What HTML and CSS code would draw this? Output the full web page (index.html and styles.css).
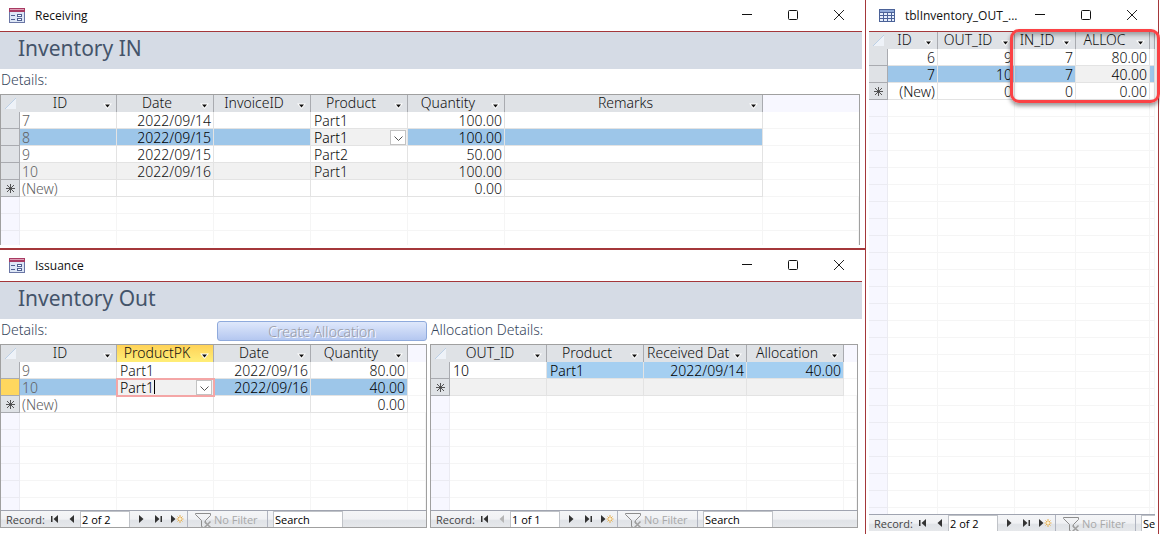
FILE: index.html
```html
<!DOCTYPE html>
<html lang="en">
<head>
    <meta charset="UTF-8">
    <meta name="viewport" content="width=device-width, initial-scale=1.0">
    <title>Inventory</title>
    <link rel="stylesheet" href="styles.css">
</head>
<body>
    <!-- shared icons -->
    <svg class="sprite" aria-hidden="true">
        <symbol id="i-form" viewBox="0 0 16 15">
            <rect x=".5" y=".5" width="15" height="14" fill="#dde6f6" stroke="#6a76a5"/>
            <rect x="0" y="0" width="16" height="4" fill="#a83a62"/>
            <path d="M1 1.500h14" stroke="#dfa0b8"/>
            <path d="M2 7.500h4M2 11.500h4" stroke="#4f5f91"/>
            <rect x="8.500" y="6.500" width="4" height="2" fill="#fff" stroke="#4f5f91"/>
            <rect x="8.500" y="10.500" width="4" height="2" fill="#fff" stroke="#4f5f91"/>
        </symbol>
        <symbol id="i-table" viewBox="0 0 16 13">
            <rect width="16" height="13" fill="#4b6298"/>
            <path d="M1 1h14v2H1z" fill="#8fa9d8"/>
            <path d="M1 4h3v2H1zM5 4h3v2H5zM9 4h3v2H9zM13 4h2v2h-2zM1 7h3v2H1zM5 7h3v2H5zM9 7h3v2H9zM13 7h2v2h-2zM1 10h3v2H1zM5 10h3v2H5zM9 10h3v2H9zM13 10h2v2h-2z" fill="#e6effc"/>
        </symbol>
        <symbol id="i-min" viewBox="0 0 11 11"><path d="M0 4.500h10" stroke="#111"/></symbol>
        <symbol id="i-max" viewBox="0 0 11 11"><rect x=".5" y=".5" width="9" height="9" rx="1" fill="none" stroke="#111"/></symbol>
        <symbol id="i-close" viewBox="0 0 11 11"><path d="M0 0l10 10M10 0L0 10" stroke="#222"/></symbol>
        <symbol id="i-first" viewBox="0 0 7 8"><path d="M0 1h1.500v6H0zM7 0v8L2.500 4z"/></symbol>
        <symbol id="i-prev" viewBox="0 0 7 8"><path d="M6 0v8L1.500 4z"/></symbol>
        <symbol id="i-next" viewBox="0 0 7 8"><path d="M1 0v8l4.500-4z"/></symbol>
        <symbol id="i-last" viewBox="0 0 7 8"><path d="M5.500 1H7v6H5.500zM0 0v8l4.500-4z"/></symbol>
        <symbol id="i-new" viewBox="0 0 13 8">
            <path d="M0 0v8l4.500-4z"/>
            <path d="M9 0v8M5.500 4h7M6.500 1.500l5 5M11.500 1.500l-5 5" stroke="#e9b04e"/>
            <circle cx="9" cy="4" r="1.200" fill="#fff3d0"/>
        </symbol>
        <symbol id="i-filter" viewBox="0 0 17 16">
            <path d="M.5 1.500h15v2l-5 5v3M.5 1.500v1l6 6v6l2 1" fill="none" stroke="#8d8d8d"/>
            <path d="M9.500 9.500l6 6M15.500 9.500l-6 6" stroke="#a0a0a0" stroke-width="1.500"/>
        </symbol>
        <symbol id="i-star" viewBox="0 0 9 9"><path d="M4.500 0v9M0 4.500h9M1 1l7 7M8 1L1 8" stroke="#444" stroke-width=".9"/></symbol>
        <symbol id="i-arrow" viewBox="0 0 9 6"><path d="M0 .5h9L4.500 6z" fill="#fff"/><path d="M2 1.500h5L4.500 4.500z" fill="#111"/></symbol>
        <symbol id="i-chevron" viewBox="0 0 9 6"><path d="M.5.5l4 4 4-4" fill="none" stroke="#555"/></symbol>
        <symbol id="i-corner" viewBox="0 0 11 11"><path d="M11 0v11H0z" fill="#eef2f8"/><path d="M0 11L11 0" stroke="#bcd0e6"/></symbol>
    </svg>

    <main class="workspace">
        <div class="forms">
            <section class="window">
                <header class="titlebar">
                    <svg class="win-icon"><use href="#i-form"/></svg>
                    <span class="win-title">Receiving</span>
                    <button class="win-btn" aria-label="Minimize"><svg><use href="#i-min"/></svg></button>
                    <button class="win-btn" aria-label="Maximize"><svg><use href="#i-max"/></svg></button>
                    <button class="win-btn" aria-label="Close"><svg><use href="#i-close"/></svg></button>
                </header>
                <h1 class="form-header">Inventory IN</h1>
                <div class="caption">Details:</div>
                <div class="sheet sheet-receiving">
                    <div class="grid">
                        <table class="datasheet">
                            <colgroup><col class="c-sel"><col class="c-std"><col class="c-std"><col class="c-std"><col class="c-std"><col class="c-std"><col class="c-remarks"><col></colgroup>
                            <thead>
                                <tr>
                                    <th class="sel"><svg class="corner"><use href="#i-corner"/></svg></th>
                                    <th><div class="head"><span>ID</span><svg><use href="#i-arrow"/></svg></div></th>
                                    <th><div class="head"><span>Date</span><svg><use href="#i-arrow"/></svg></div></th>
                                    <th><div class="head"><span>InvoiceID</span><svg><use href="#i-arrow"/></svg></div></th>
                                    <th><div class="head"><span>Product</span><svg><use href="#i-arrow"/></svg></div></th>
                                    <th><div class="head"><span>Quantity</span><svg><use href="#i-arrow"/></svg></div></th>
                                    <th><div class="head"><span>Remarks</span><svg><use href="#i-arrow"/></svg></div></th>
                                    <th class="rest"></th>
                                </tr>
                            </thead>
                            <tbody>
                                <tr><td class="sel"></td><td class="auto">7</td><td class="num">2022/09/14</td><td></td><td>Part1</td><td class="num">100.00</td><td></td><td class="rest"></td></tr>
                                <tr class="current"><td class="sel"></td><td class="auto">8</td><td class="num">2022/09/15</td><td></td>
                                    <td class="combo">
                                        <select aria-label="Product"><option>Part1</option><option>Part2</option></select>
                                        <span class="drop"><svg><use href="#i-chevron"/></svg></span>
                                    </td>
                                    <td class="num">100.00</td><td></td><td class="rest"></td></tr>
                                <tr><td class="sel"></td><td class="auto">9</td><td class="num">2022/09/15</td><td></td><td>Part2</td><td class="num">50.00</td><td></td><td class="rest"></td></tr>
                                <tr class="alt"><td class="sel"></td><td class="auto">10</td><td class="num">2022/09/16</td><td></td><td>Part1</td><td class="num">100.00</td><td></td><td class="rest"></td></tr>
                                <tr><td class="sel"><svg class="star"><use href="#i-star"/></svg></td><td class="auto">(New)</td><td></td><td></td><td></td><td class="num">0.00</td><td></td><td class="rest"></td></tr>
                            </tbody>
                        </table>
                    </div>
                </div>
            </section>

            <section class="window">
                <header class="titlebar">
                    <svg class="win-icon"><use href="#i-form"/></svg>
                    <span class="win-title">Issuance</span>
                    <button class="win-btn" aria-label="Minimize"><svg><use href="#i-min"/></svg></button>
                    <button class="win-btn" aria-label="Maximize"><svg><use href="#i-max"/></svg></button>
                    <button class="win-btn" aria-label="Close"><svg><use href="#i-close"/></svg></button>
                </header>
                <h1 class="form-header">Inventory Out</h1>
                <div class="split">
                    <div class="pane">
                        <div class="caption">Details:<button class="create" disabled>Create Allocation</button></div>
                        <div class="sheet">
                            <div class="grid">
                                <table class="datasheet">
                                    <colgroup><col class="c-sel"><col class="c-std"><col class="c-std"><col class="c-std"><col class="c-std"><col></colgroup>
                                    <thead>
                                        <tr>
                                            <th class="sel"><svg class="corner"><use href="#i-corner"/></svg></th>
                                            <th><div class="head"><span>ID</span><svg><use href="#i-arrow"/></svg></div></th>
                                            <th class="active"><div class="head"><span>ProductPK</span><svg><use href="#i-arrow"/></svg></div></th>
                                            <th><div class="head"><span>Date</span><svg><use href="#i-arrow"/></svg></div></th>
                                            <th><div class="head"><span>Quantity</span><svg><use href="#i-arrow"/></svg></div></th>
                                            <th class="rest"></th>
                                        </tr>
                                    </thead>
                                    <tbody>
                                        <tr><td class="sel"></td><td class="auto">9</td><td>Part1</td><td class="num">2022/09/16</td><td class="num">80.00</td><td class="rest"></td></tr>
                                        <tr class="current"><td class="sel active"></td><td class="auto">10</td>
                                            <td class="combo editing">
                                                <select aria-label="ProductPK"><option>Part1</option><option>Part2</option></select>
                                                <span class="caret"></span>
                                                <span class="drop"><svg><use href="#i-chevron"/></svg></span>
                                            </td>
                                            <td class="num">2022/09/16</td><td class="num">40.00</td><td class="rest"></td></tr>
                                        <tr><td class="sel"><svg class="star"><use href="#i-star"/></svg></td><td class="auto">(New)</td><td></td><td></td><td class="num">0.00</td><td class="rest"></td></tr>
                                    </tbody>
                                </table>
                            </div>
                            <nav class="recordbar">
                                <label for="rec-issuance">Record:</label>
                                <button aria-label="First record"><svg><use href="#i-first"/></svg></button>
                                <button aria-label="Previous record"><svg><use href="#i-prev"/></svg></button>
                                <input class="rec" id="rec-issuance" type="text" value="2 of 2">
                                <button aria-label="Next record"><svg><use href="#i-next"/></svg></button>
                                <button aria-label="Last record"><svg><use href="#i-last"/></svg></button>
                                <button class="new" aria-label="New record"><svg><use href="#i-new"/></svg></button>
                                <button class="filter" disabled><svg><use href="#i-filter"/></svg>No Filter</button>
                                <input class="search" type="text" placeholder="Search" aria-label="Search">
                            </nav>
                        </div>
                    </div>
                    <div class="pane">
                        <div class="caption">Allocation Details:</div>
                        <div class="sheet">
                            <div class="grid">
                                <table class="datasheet">
                                    <colgroup><col class="c-sel"><col class="c-std"><col class="c-std"><col class="c-received"><col class="c-std"><col></colgroup>
                                    <thead>
                                        <tr>
                                            <th class="sel"><svg class="corner"><use href="#i-corner"/></svg></th>
                                            <th><div class="head"><span>OUT_ID</span><svg><use href="#i-arrow"/></svg></div></th>
                                            <th><div class="head"><span>Product</span><svg><use href="#i-arrow"/></svg></div></th>
                                            <th><div class="head"><span class="cut">Received Date</span><svg><use href="#i-arrow"/></svg></div></th>
                                            <th><div class="head"><span>Allocation</span><svg><use href="#i-arrow"/></svg></div></th>
                                            <th class="rest"></th>
                                        </tr>
                                    </thead>
                                    <tbody>
                                        <tr class="current light"><td class="sel"></td><td class="first">10</td><td>Part1</td><td class="num">2022/09/14</td><td class="num">40.00</td><td class="rest"></td></tr>
                                        <tr class="alt"><td class="sel"><svg class="star"><use href="#i-star"/></svg></td><td></td><td></td><td></td><td></td><td class="rest"></td></tr>
                                    </tbody>
                                </table>
                            </div>
                            <nav class="recordbar">
                                <label for="rec-allocation">Record:</label>
                                <button aria-label="First record"><svg><use href="#i-first"/></svg></button>
                                <button aria-label="Previous record" disabled><svg><use href="#i-prev"/></svg></button>
                                <input class="rec" id="rec-allocation" type="text" value="1 of 1">
                                <button aria-label="Next record"><svg><use href="#i-next"/></svg></button>
                                <button aria-label="Last record"><svg><use href="#i-last"/></svg></button>
                                <button class="new" aria-label="New record"><svg><use href="#i-new"/></svg></button>
                                <button class="filter" disabled><svg><use href="#i-filter"/></svg>No Filter</button>
                                <input class="search" type="text" placeholder="Search" aria-label="Search">
                            </nav>
                        </div>
                    </div>
                </div>
            </section>
        </div>

        <section class="window table-window">
            <header class="titlebar">
                <svg class="win-icon"><use href="#i-table"/></svg>
                <span class="win-title">tblInventory_OUT_...</span>
                <button class="win-btn" aria-label="Minimize"><svg><use href="#i-min"/></svg></button>
                <button class="win-btn" aria-label="Maximize"><svg><use href="#i-max"/></svg></button>
                <button class="win-btn" aria-label="Close"><svg><use href="#i-close"/></svg></button>
            </header>
            <div class="grid">
                <table class="datasheet">
                    <colgroup><col class="c-sel"><col class="c-id"><col class="c-out"><col class="c-in"><col class="c-alloc"><col></colgroup>
                    <thead>
                        <tr>
                            <th class="sel"><svg class="corner"><use href="#i-corner"/></svg></th>
                            <th><div class="head"><span>ID</span><svg><use href="#i-arrow"/></svg></div></th>
                            <th><div class="head"><span>OUT_ID</span><svg><use href="#i-arrow"/></svg></div></th>
                            <th><div class="head"><span>IN_ID</span><svg><use href="#i-arrow"/></svg></div></th>
                            <th><div class="head"><span>ALLOC</span><svg><use href="#i-arrow"/></svg></div></th>
                            <th></th>
                        </tr>
                    </thead>
                    <tbody>
                        <tr><td class="sel"></td><td class="num">6</td><td class="num">9</td><td class="num">7</td><td class="num">80.00</td><td></td></tr>
                        <tr class="current"><td class="sel"></td><td class="num">7</td><td class="num">10</td><td class="num">7</td><td class="num focus">40.00</td><td></td></tr>
                        <tr><td class="sel"><svg class="star"><use href="#i-star"/></svg></td><td class="num">(New)</td><td class="num">0</td><td class="num">0</td><td class="num">0.00</td><td></td></tr>
                    </tbody>
                </table>
            </div>
            <nav class="recordbar">
                <label for="rec-table">Record:</label>
                <button aria-label="First record"><svg><use href="#i-first"/></svg></button>
                <button aria-label="Previous record"><svg><use href="#i-prev"/></svg></button>
                <input class="rec" id="rec-table" type="text" value="2 of 2">
                <button aria-label="Next record"><svg><use href="#i-next"/></svg></button>
                <button aria-label="Last record"><svg><use href="#i-last"/></svg></button>
                <button class="new" aria-label="New record"><svg><use href="#i-new"/></svg></button>
                <button class="filter" disabled><svg><use href="#i-filter"/></svg>No Filter</button>
                <input class="search" type="text" placeholder="Search" aria-label="Search">
            </nav>
            <div class="callout"></div>
        </section>
    </main>

    <script>
        // pad every datasheet with blank rows until its grid is full
        document.querySelectorAll(".grid").forEach(grid => {
            const table = grid.querySelector("table");
            const cols = table.querySelectorAll("col").length;
            const body = table.querySelector("tbody");
            while (table.offsetHeight < grid.clientHeight) {
                const row = body.insertRow();
                row.className = "empty";
                for (let i = 0; i < cols; i++) {
                    row.insertCell();
                }
                row.cells[0].className = "sel";
            }
        });
    </script>
</body>
</html>
```

FILE: styles.css
```css
:root {
    --red: #a4373a;
    --head-bg: #dfe2e6;
    --head-line: #a9abb0;
    --line: #e3e3e3;
    --faint: #f5f5f5;
    --blank: #f7f7ff;
    --current: #9dc6e9;
}

* {
    box-sizing: border-box;
}

body {
    margin: 0;
    background: white;
    font-family: "Noto Sans", "Open Sans", sans-serif;
    font-size: 12px;
    color: #111;
}
button, input, select {
    font: inherit;
    color: inherit;
    margin: 0;
    padding: 0;
    border: none;
    border-radius: 0;
    background: none;
}
.sprite {
    display: none;
}
.workspace {
    display: flex;
    height: 100vh;
    overflow: hidden;
}

/* windows */
.forms {
    flex: 1;
    min-width: 0;
    display: grid;
    grid-template-rows: 250px 1fr;
    border-right: 1px solid var(--red);
}
.window {
    display: flex;
    flex-direction: column;
    min-height: 0;
    min-width: 0;
    padding: 0 3px 6px 0;
}
.forms .window:first-child {
    padding-bottom: 3px;
    border-bottom: 2px solid var(--red);
}
.table-window {
    position: relative;
    width: 293px;
    margin-right: 1px;
    padding: 0 3px 3px;
    border-right: 1px solid var(--red);
}
.titlebar {
    display: flex;
    align-items: center;
    flex: none;
    height: 32px;
    padding-left: 9px;
    border-bottom: 1px solid var(--red);
    font-family: "Open Sans", sans-serif;
    color: #111;
}
.table-window .titlebar {
    padding-left: 10px;
}
.win-icon {
    width: 16px;
    height: 15px;
    margin-right: 10px;
}
.win-title {
    flex: 1;
    min-width: 0;
    white-space: nowrap;
}
.win-btn {
    display: flex;
    align-items: center;
    justify-content: center;
    flex: none;
    width: 46px;
    height: 30px;
}
.win-btn svg {
    width: 11px;
    height: 11px;
}
.form-header {
    flex: none;
    height: 37px;
    margin: 0;
    padding-left: 18px;
    background: #d5dbe5;
    color: #44546a;
    font-size: 21px;
    font-weight: 400;
    line-height: 33px;
}
.caption {
    display: flex;
    justify-content: space-between;
    flex: none;
    height: 25px;
    padding: 2px 0 3px 1px;
    color: #34445a;
    font-size: 14px;
    font-weight: 300;
    line-height: 17px;
}
.create {
    width: 210px;
    height: 20px;
    border: 1px solid #8faadc;
    border-radius: 3px;
    background: linear-gradient(#dfe8fb, #b4c7f0);
    color: #9a9aa4;
    text-shadow: 1px 1px 0 white;
}
.split {
    flex: 1;
    min-height: 0;
    display: grid;
    grid-template-columns: 427px 1fr;
    gap: 3px;
    padding-right: 4px;
}
.pane {
    display: flex;
    flex-direction: column;
    min-width: 0;
    min-height: 0;
}

/* datasheets */
.sheet {
    display: flex;
    flex-direction: column;
    flex: 1;
    min-height: 0;
    border: 1px solid #a0a0a0;
}
.sheet-receiving {
    margin-right: 2px;
    border-bottom: none;
}
.grid {
    flex: 1;
    min-height: 0;
    overflow: hidden;
}
.datasheet {
    width: 100%;
    table-layout: fixed;
    border-collapse: separate;
    border-spacing: 0;
    font-size: 14px;
    font-weight: 300;
    line-height: 15px;
}
.c-sel { width: 19px; }
.c-std { width: 97px; }
.c-remarks { width: 258px; }
.c-received { width: 103px; }
.c-id { width: 50px; }
.c-out { width: 77px; }
.c-in { width: 61px; }
.c-alloc { width: 74px; }

.datasheet th {
    height: 17px;
    padding: 0;
    background: var(--head-bg);
    border-right: 1px solid var(--head-line);
    font-weight: 300;
}
.datasheet th.sel {
    border-right-color: var(--head-bg);
}
.datasheet th.rest {
    background: var(--blank);
    border-right: none;
}
.datasheet th.active {
    background: linear-gradient(#ffd257, #ffee78);
}
.head {
    display: flex;
    align-items: center;
    height: 17px;
}
.head span {
    flex: 1;
    min-width: 0;
    white-space: nowrap;
    text-align: center;
    line-height: 17px;
    height: 19px;
}
.head .cut {
    padding-left: 3px;
    overflow: hidden;
    text-align: left;
}
.head svg {
    flex: none;
    width: 9px;
    height: 6px;
    margin: 4px 4px 0 3px;
}
.corner {
    display: block;
    width: 11px;
    height: 11px;
    margin-left: 4px;
}
.star {
    display: block;
    width: 9px;
    height: 9px;
    margin-left: 5px;
}
.datasheet td {
    height: 17px;
    padding: 1px 2px 0 3px;
    border-right: 1px solid var(--line);
    border-bottom: 1px solid var(--line);
    white-space: nowrap;
}
.datasheet .num {
    text-align: right;
}
.datasheet .auto {
    padding-left: 2px;
    color: #606060;
}
.alt td {
    background: #f1f1f1;
}
.current td {
    background: var(--current);
    color: black;
}
.light td {
    background: #a5cff1;
}
.datasheet td.sel {
    padding: 0;
    background: var(--head-bg);
    border-color: var(--head-line);
}
.datasheet td.first {
    background: white;
}
.datasheet td.rest,
.datasheet .empty td {
    background: white;
    border-color: var(--faint);
}
.datasheet td.rest {
    border-right: none;
}
.datasheet .empty td.sel {
    background: var(--blank);
    border-color: #ebebf2;
}
.datasheet td.active {
    background: #ffd75e;
}
.datasheet td.focus,
.datasheet td.combo {
    background: #f1f1f1;
}
.datasheet td.combo {
    position: relative;
    padding: 1px 0 0;
}
.combo select {
    display: block;
    width: 100%;
    height: 15px;
    padding-left: 3px;
    appearance: none;
    line-height: 15px;
}
.editing {
    outline: 2px solid #f4a6a6;
    outline-offset: -1px;
}
.caret {
    position: absolute;
    left: 37px;
    top: 1px;
    width: 1px;
    height: 14px;
    background: black;
}
.drop {
    position: absolute;
    right: 1px;
    top: 1px;
    display: flex;
    align-items: center;
    justify-content: center;
    width: 16px;
    height: 15px;
    border: 1px solid #c3c3c3;
    background: white;
    pointer-events: none;
}
.drop svg {
    width: 9px;
    height: 6px;
    margin-top: 3px;
}

/* record navigation */
.recordbar {
    display: flex;
    align-items: center;
    flex: none;
    height: 17px;
    padding-left: 5px;
    overflow: hidden;
    border-top: 1px solid #a0a4b0;
    background: linear-gradient(#f4f5f7, #f0f1f4 50%, #e0e3e7 60%, #e6e8eb);
    font-family: "Open Sans", sans-serif;
    font-size: 11px;
    line-height: 16px;
    color: #444;
}
.recordbar label {
    flex: none;
    width: 40px;
    padding-top: 1px;
}
.recordbar button {
    display: flex;
    align-items: center;
    justify-content: center;
    flex: none;
    width: 17px;
    height: 16px;
    fill: #333;
}
.recordbar button:disabled {
    fill: #b5b5b5;
}
.recordbar svg {
    width: 7px;
    height: 8px;
}
.recordbar input {
    flex: none;
    height: 16px;
    padding-left: 1px;
    border: 1px solid #c0c3c8;
    border-bottom: none;
    background: white;
    color: black;
}
.recordbar .rec {
    width: 50px;
    margin-right: 3px;
}
.recordbar .new {
    width: 20px;
}
.recordbar .new svg {
    width: 13px;
}
.recordbar .filter {
    justify-content: flex-start;
    gap: 2px;
    width: 81px;
    margin-right: 5px;
    padding: 1px 0 0 7px;
    border: 1px solid #b0b4c0;
    border-width: 0 1px;
    color: #a8a8a8;
}
.recordbar .filter svg {
    width: 17px;
    height: 16px;
}
.recordbar .search {
    width: 70px;
}
.recordbar .search::placeholder {
    color: black;
    opacity: 1;
}

/* highlight drawn over the IN_ID and ALLOC columns */
.callout {
    position: absolute;
    top: 29px;
    right: -2px;
    width: 150px;
    height: 74px;
    border: 3px solid #fb4245;
    border-radius: 9px;
    box-shadow: 0 3px 4px rgba(0, 0, 0, 0.4), inset 0 3px 4px rgba(0, 0, 0, 0.3);
    pointer-events: none;
}
```
